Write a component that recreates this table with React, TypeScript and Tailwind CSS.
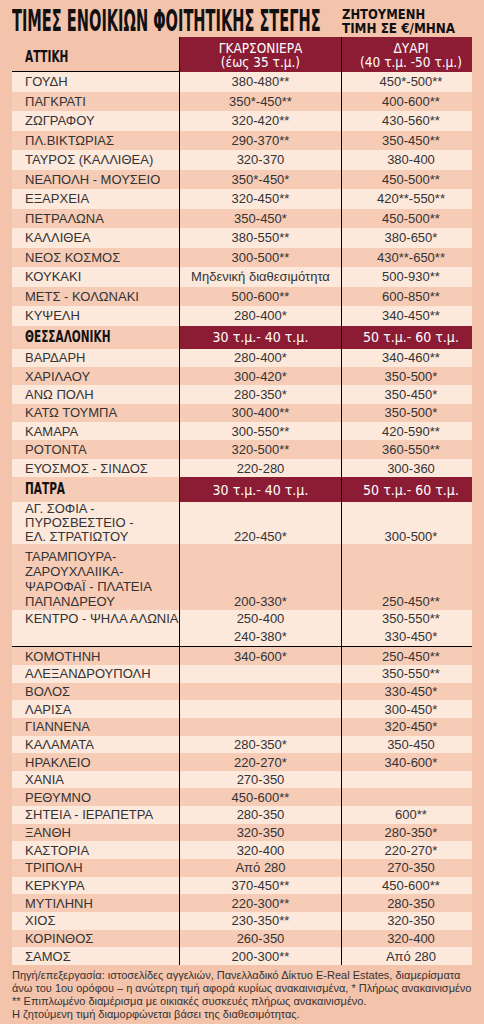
import React from "react";

type Item = { name: string; a?: string; b?: string };

const attiki: Item[] = [
  { name: "ΓΟΥΔΗ", a: "380-480**", b: "450*-500**" },
  { name: "ΠΑΓΚΡΑΤΙ", a: "350*-450**", b: "400-600**" },
  { name: "ΖΩΓΡΑΦΟΥ", a: "320-420**", b: "430-560**" },
  { name: "ΠΛ.ΒΙΚΤΩΡΙΑΣ", a: "290-370**", b: "350-450**" },
  { name: "ΤΑΥΡΟΣ (ΚΑΛΛΙΘΕΑ)", a: "320-370", b: "380-400" },
  { name: "ΝΕΑΠΟΛΗ - ΜΟΥΣΕΙΟ", a: "350*-450*", b: "450-500**" },
  { name: "ΕΞΑΡΧΕΙΑ", a: "320-450**", b: "420**-550**" },
  { name: "ΠΕΤΡΑΛΩΝΑ", a: "350-450*", b: "450-500**" },
  { name: "ΚΑΛΛΙΘΕΑ", a: "380-550**", b: "380-650*" },
  { name: "ΝΕΟΣ ΚΟΣΜΟΣ", a: "300-500**", b: "430**-650**" },
  { name: "ΚΟΥΚΑΚΙ", a: "Μηδενική διαθεσιμότητα", b: "500-930**" },
  { name: "ΜΕΤΣ - ΚΟΛΩΝΑΚΙ", a: "500-600**", b: "600-850**" },
  { name: "ΚΥΨΕΛΗ", a: "280-400*", b: "340-450**" },
];

const thessaloniki: Item[] = [
  { name: "ΒΑΡΔΑΡΗ", a: "280-400*", b: "340-460**" },
  { name: "ΧΑΡΙΛΑΟΥ", a: "300-420*", b: "350-500*" },
  { name: "ΑΝΩ ΠΟΛΗ", a: "280-350*", b: "350-450*" },
  { name: "ΚΑΤΩ ΤΟΥΜΠΑ", a: "300-400**", b: "350-500*" },
  { name: "ΚΑΜΑΡΑ", a: "300-550**", b: "420-590**" },
  { name: "ΡΟΤΟΝΤΑ", a: "320-500**", b: "360-550**" },
  { name: "ΕΥΟΣΜΟΣ - ΣΙΝΔΟΣ", a: "220-280", b: "300-360" },
];

const rest: Item[] = [
  { name: "ΚΟΜΟΤΗΝΗ", a: "340-600*", b: "250-450**" },
  { name: "ΑΛΕΞΑΝΔΡΟΥΠΟΛΗ", b: "350-550**" },
  { name: "ΒΟΛΟΣ", b: "330-450*" },
  { name: "ΛΑΡΙΣΑ", b: "300-450*" },
  { name: "ΓΙΑΝΝΕΝΑ", b: "320-450*" },
  { name: "ΚΑΛΑΜΑΤΑ", a: "280-350*", b: "350-450" },
  { name: "ΗΡΑΚΛΕΙΟ", a: "220-270*", b: "340-600*" },
  { name: "ΧΑΝΙΑ", a: "270-350" },
  { name: "ΡΕΘΥΜΝΟ", a: "450-600**" },
  { name: "ΣΗΤΕΙΑ - ΙΕΡΑΠΕΤΡΑ", a: "280-350", b: "600**" },
  { name: "ΞΑΝΘΗ", a: "320-350", b: "280-350*" },
  { name: "ΚΑΣΤΟΡΙΑ", a: "320-400", b: "220-270*" },
  { name: "ΤΡΙΠΟΛΗ", a: "Από 280", b: "270-350" },
  { name: "ΚΕΡΚΥΡΑ", a: "370-450**", b: "450-600**" },
  { name: "ΜΥΤΙΛΗΝΗ", a: "220-300**", b: "280-350" },
  { name: "ΧΙΟΣ", a: "230-350**", b: "320-350" },
  { name: "ΚΟΡΙΝΘΟΣ", a: "260-350", b: "320-400" },
  { name: "ΣΑΜΟΣ", a: "200-300**", b: "Από 280" },
];

const LIGHT = "bg-[#fde8dc]";
const DARK = "bg-[#f7ccb7]";

function Row({ item, light, height }: { item: Item; light: boolean; height: string }) {
  return (
    <div className={`grid grid-cols-[167px_162px_131px] ${height} ${light ? LIGHT : DARK}`}>
      <div className="flex items-center whitespace-nowrap pl-[13px]">{item.name}</div>
      <div className="flex items-center justify-center whitespace-nowrap border-l border-black">{item.a}</div>
      <div className="flex items-center justify-center whitespace-nowrap border-l border-black pl-[8px]">{item.b}</div>
    </div>
  );
}

function SectionHead({ title, height }: { title: string; height: string }) {
  return (
    <div className={`grid grid-cols-[167px_162px_131px] ${height}`}>
      <div className={`flex items-center pl-[13px] ${DARK}`}>
        <span className="inline-block origin-left scale-x-[0.78] font-['DejaVu_Sans_Condensed',sans-serif] text-[15px] font-bold text-[#111]">
          {title}
        </span>
      </div>
      <div className="flex items-center justify-center border-l border-black bg-[#8c1c34] font-['DejaVu_Sans_Condensed',sans-serif] text-[14px] text-white">
        30 τ.μ.- 40 τ.μ.
      </div>
      <div className="flex items-center justify-center border-l border-black bg-[#8c1c34] pl-[8px] font-['DejaVu_Sans_Condensed',sans-serif] text-[14px] text-white">
        50 τ.μ.- 60 τ.μ.
      </div>
    </div>
  );
}

export default function App() {
  return (
    <div className="h-[1024px] w-[484px] overflow-hidden bg-[#f3c3ab] font-['Liberation_Sans',Arial,sans-serif] text-[13px] leading-none text-[#333]">
      <div className="ml-[12px] w-[460px]">
        {/* title */}
        <div className="grid h-[37px] grid-cols-[329px_131px] font-['DejaVu_Sans_Condensed',sans-serif] font-bold text-[#111]">
          <div className="pt-[6px]">
            <span className="inline-block origin-left scale-x-[0.54] whitespace-nowrap text-[30px] leading-[30px]">
              ΤΙΜΕΣ ΕΝΟΙΚΙΩΝ ΦΟΙΤΗΤΙΚΗΣ ΣΤΕΓΗΣ
            </span>
          </div>
          <div className="pt-[7px] pl-[1px] text-[14px] leading-[14px]">
            <div className="origin-left scale-x-[0.92] whitespace-nowrap">ΖΗΤΟΥΜΕΝΗ</div>
            <div className="origin-left scale-x-[0.95] whitespace-nowrap">ΤΙΜΗ ΣΕ €/ΜΗΝΑ</div>
          </div>
        </div>

        {/* attiki header */}
        <div className="grid h-[35px] grid-cols-[167px_162px_131px]">
          <div className="flex items-end border-b border-black pb-[6px] pl-[13px]">
            <span className="inline-block origin-left scale-x-[0.78] font-['DejaVu_Sans_Condensed',sans-serif] text-[15px] font-bold text-[#111]">
              ΑΤΤΙΚΗ
            </span>
          </div>
          <div className="flex flex-col items-center justify-center border-l border-black bg-[#8c1c34] font-['DejaVu_Sans_Condensed',sans-serif] text-[13.5px] leading-[14px] text-white">
            <span>ΓΚΑΡΣΟΝΙΕΡΑ</span>
            <span>(έως 35 τ.μ.)</span>
          </div>
          <div className="flex flex-col items-center justify-center border-l border-black bg-[#8c1c34] pl-[8px] font-['DejaVu_Sans_Condensed',sans-serif] text-[13.5px] leading-[14px] text-white">
            <span>ΔΥΑΡΙ</span>
            <span>(40 τ.μ. -50 τ.μ.)</span>
          </div>
        </div>

        {attiki.map((it, i) => (
          <Row key={it.name} item={it} light={i % 2 === 0} height="h-[19.5px]" />
        ))}

        <SectionHead title="ΘΕΣΣΑΛΟΝΙΚΗ" height="h-[23px]" />
        {thessaloniki.map((it, i) => (
          <Row key={it.name} item={it} light={i % 2 === 0} height="h-[18.4px]" />
        ))}

        <SectionHead title="ΠΑΤΡΑ" height="h-[25px]" />

        {/* patra multi-line rows */}
        <div className={`grid h-[42px] grid-cols-[167px_162px_131px] leading-[14px] ${LIGHT}`}>
          <div className="flex flex-col justify-end whitespace-nowrap pl-[13px]">
            <span>ΑΓ. ΣΟΦΙΑ -</span>
            <span>ΠΥΡΟΣΒΕΣΤΕΙΟ -</span>
            <span>ΕΛ. ΣΤΡΑΤΙΩΤΟΥ</span>
          </div>
          <div className="flex items-end justify-center border-l border-black">220-450*</div>
          <div className="flex items-end justify-center border-l border-black pl-[8px]">300-500*</div>
        </div>
        <div className={`grid h-[66px] grid-cols-[167px_162px_131px] leading-[14.7px] ${DARK}`}>
          <div className="flex flex-col justify-end whitespace-nowrap pb-[1px] pl-[13px]">
            <span>ΤΑΡΑΜΠΟΥΡΑ-</span>
            <span>ΖΑΡΟΥΧΛΑΙΙΚΑ-</span>
            <span>ΨΑΡΟΦΑΪ - ΠΛΑΤΕΙΑ</span>
            <span>ΠΑΠΑΝΔΡΕΟΥ</span>
          </div>
          <div className="flex items-end justify-center border-l border-black pb-[1px]">200-330*</div>
          <div className="flex items-end justify-center border-l border-black pb-[1px] pl-[8px]">250-450**</div>
        </div>
        <div className={`grid h-[36px] grid-cols-[167px_162px_131px] leading-[18px] ${LIGHT}`}>
          <div className="whitespace-nowrap pl-[13px]">ΚΕΝΤΡΟ - ΨΗΛΑ ΑΛΩΝΙΑ</div>
          <div className="flex flex-col items-center border-l border-black">
            <span>250-400</span>
            <span>240-380*</span>
          </div>
          <div className="flex flex-col items-center border-l border-black pl-[8px]">
            <span>350-550**</span>
            <span>330-450*</span>
          </div>
        </div>

        <div className="border-t border-black">
          {rest.map((it, i) => (
            <Row key={it.name} item={it} light={i % 2 === 1} height="h-[17.67px]" />
          ))}
        </div>
      </div>

      {/* notes */}
      <div className="pl-[12px] pt-[4px] text-[11px] leading-[13px] text-[#333]">
        <p className="whitespace-nowrap">Πηγή/επεξεργασία: ιστοσελίδες αγγελιών, Πανελλαδικό Δίκτυο E-Real Estates, διαμερίσματα</p>
        <p className="whitespace-nowrap">άνω του 1ου ορόφου – η ανώτερη τιμή αφορά κυρίως ανακαινισμένα, * Πλήρως ανακαινισμένο</p>
        <p className="whitespace-nowrap">** Επιπλωμένο διαμέρισμα με οικιακές συσκευές πλήρως ανακαινισμένο.</p>
        <p className="whitespace-nowrap">Η ζητούμενη τιμή διαμορφώνεται βάσει της διαθεσιμότητας.</p>
      </div>
    </div>
  );
}
